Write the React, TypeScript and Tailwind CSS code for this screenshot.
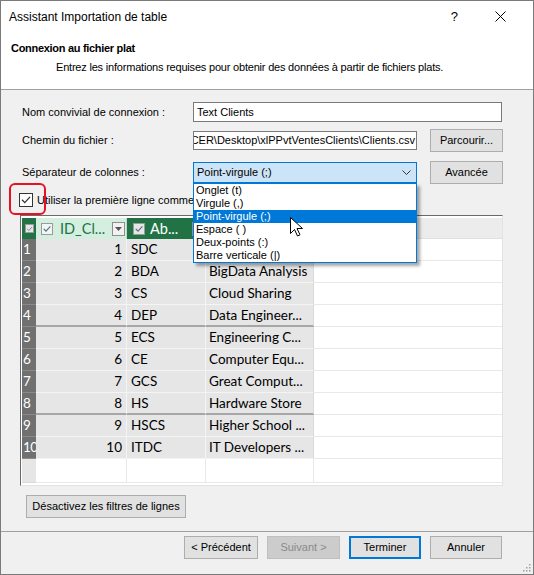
import React from 'react';

const dlg = "font-['Liberation_Sans',Arial,sans-serif]";
const grid = "font-['Lato','Noto_Sans',sans-serif]";

const rows = [
  { id: 1, ab: 'SDC', name: 'Software Dev...' },
  { id: 2, ab: 'BDA', name: 'BigData Analysis' },
  { id: 3, ab: 'CS', name: 'Cloud Sharing' },
  { id: 4, ab: 'DEP', name: 'Data Engineer...' },
  { id: 5, ab: 'ECS', name: 'Engineering C...' },
  { id: 6, ab: 'CE', name: 'Computer Equ...' },
  { id: 7, ab: 'GCS', name: 'Great Comput...' },
  { id: 8, ab: 'HS', name: 'Hardware Store' },
  { id: 9, ab: 'HSCS', name: 'Higher School ...' },
  { id: 10, ab: 'ITDC', name: 'IT Developers ...' },
];

const options = ['Onglet (t)', 'Virgule (,)', 'Point-virgule (;)', 'Espace ( )', 'Deux-points (:)', 'Barre verticale (|)'];

const Check = ({ className }: { className: string }) => (
  <svg className={className} viewBox="0 0 12 12" fill="none" stroke="currentColor" strokeWidth={1.3}>
    <path d="M2.5 6.2l2.3 2.4 4.8-5.2" strokeLinecap="square" />
  </svg>
);

const Btn = ({ label, w, extra = '' }: { label: string; w: string; extra?: string }) => (
  <div className={`${w} h-[23px] flex items-center justify-center bg-[#e1e1e1] border border-[#adadad] text-[11px] text-black ${extra}`}>
    {label}
  </div>
);

export default function App() {
  return (
    <div className={`${dlg} relative w-[534px] h-[575px] bg-[#f0f0f0] border border-[#7a7a7a] flex flex-col overflow-hidden`}>
      {/* title bar */}
      <div className="h-[31px] bg-white flex items-center pl-[8px]">
        <span className="text-[12px] text-black">Assistant Importation de table</span>
        <span className="ml-auto text-[13px] text-black mr-[37px]">?</span>
        <svg className="w-[11px] h-[11px] mr-[27px]" viewBox="0 0 11 11" stroke="#000" strokeWidth={1}>
          <path d="M0.5 0.5l10 10M10.5 0.5l-10 10" />
        </svg>
      </div>

      {/* header */}
      <div className="h-[58px] bg-white border-b border-[#a0a0a0] pl-[10px] pt-[8px]">
        <div className="text-[11px] font-bold text-black tracking-[-0.3px]">Connexion au fichier plat</div>
        <div className="text-[11px] text-black pl-[45px] mt-[2px] tracking-[-0.2px]">
          Entrez les informations requises pour obtenir des données à partir de fichiers plats.
        </div>
      </div>

      {/* body */}
      <div className="px-[19px] flex flex-col text-[11px] text-black">
        <div className="mt-[12px] h-[20px] flex items-center">
          <span className="w-[173px] pl-[2px]">Nom convivial de connexion :</span>
          <div className="w-[309px] h-[20px] bg-white border border-[#7a7a7a] flex items-center pl-[3px]">Text Clients</div>
        </div>

        <div className="mt-[6px] h-[24px] flex items-center">
          <span className="w-[173px] pl-[2px]">Chemin du fichier :</span>
          <div className="w-[224px] h-[19px] bg-white border border-[#7a7a7a] flex items-center overflow-hidden whitespace-nowrap justify-end pr-[1px]">
            <span className="shrink-0">\CER\Desktop\xlPPvtVentesClients\Clients.csv</span>
          </div>
          <Btn label="Parcourir..." w="w-[73px]" extra="ml-[13px]" />
        </div>

        <div className="mt-[9px] h-[23px] flex items-center">
          <span className="w-[173px] pl-[2px]">Séparateur de colonnes :</span>
          <div className="relative w-[224px] h-[21px] bg-[#cce4f7] border border-[#0078d7] flex items-center pl-[3px]">
            Point-virgule (;)
            <svg className="absolute right-[5px] top-[7px] w-[9px] h-[6px]" viewBox="0 0 9 6" fill="none" stroke="#333" strokeWidth={1}>
              <path d="M0.5 0.5l4 4 4-4" />
            </svg>
            {/* open list */}
            <div className="absolute left-[-1px] top-[20px] w-[224px] bg-white border border-[#0078d7] shadow-[3px_3px_3px_rgba(0,0,0,0.35)] z-20">
              {options.map((o, i) => (
                <div
                  key={o}
                  className={`h-[13px] leading-[13px] pl-[2px] text-[11px] ${i === 2 ? 'bg-[#0078d7] text-white' : 'text-black'}`}
                >
                  {o}
                </div>
              ))}
            </div>
          </div>
          <Btn label="Avancée" w="w-[73px]" extra="ml-[13px]" />
        </div>

        {/* checkbox row */}
        <div className="mt-[8px] h-[16px] flex items-center relative">
          <div className="relative ml-[-1px] w-[14px] h-[14px] bg-white border border-[#333] flex items-center justify-center">
            <Check className="w-[12px] h-[12px] text-[#333]" />
            <div className="absolute left-[-11px] top-[-11px] w-[37px] h-[32px] border-2 border-[#e81123] rounded-[6px]" />
          </div>
          <span className="ml-[4px] whitespace-nowrap">Utiliser la première ligne comme en-têtes de colonnes</span>
        </div>

        {/* data grid */}
        <div className={`${grid} mt-[7px] w-[483px] h-[271px] bg-white border-t border-l border-[#6a6a6a] border-r border-b border-r-[#e3e3e3] border-b-[#e3e3e3] pt-[2px] pl-[1px] overflow-hidden`}>
          <div className="flex h-[21px]">
            <div className="w-[14px] bg-[#217346] flex items-center justify-center">
              <div className="w-[9px] h-[9px] bg-[#e6e6e6] border border-[#9a9a9a] flex items-center justify-center">
                <Check className="w-[8px] h-[8px] text-[#5a6a8a]" />
              </div>
            </div>
            <div className="w-[91px] bg-[#d4efdf] border-r border-[#b9dcc7] flex items-center pl-[5px]">
              <div className="w-[12px] h-[12px] bg-[#eef7f1] border border-[#9a9a9a] flex items-center justify-center">
                <Check className="w-[10px] h-[10px] text-[#5a6a8a]" />
              </div>
              <span className="ml-[7px] text-[14.5px] text-[#217346]">ID_Cl...</span>
              <div className="ml-auto mr-[1px] w-[13px] h-[14px] bg-[#f2f2f2] border border-[#8f8f8f] flex items-center justify-center">
                <svg className="w-[7px] h-[4px]" viewBox="0 0 7 4" fill="#555"><path d="M0 0h7L3.5 4z" /></svg>
              </div>
            </div>
            <div className="w-[79px] bg-[#217346] flex items-center pl-[6px]">
              <div className="w-[12px] h-[12px] bg-[#e6e6e6] border border-[#9a9a9a] flex items-center justify-center">
                <Check className="w-[10px] h-[10px] text-[#5a6a8a]" />
              </div>
              <span className="ml-[5px] text-[14.5px] text-white">Ab...</span>
              <div className="ml-auto mr-[1px] w-[13px] h-[14px] bg-[#f2f2f2] border border-[#8f8f8f]" />
            </div>
            <div className="w-[108px] bg-[#217346]" />
            <div className="flex-1 bg-[#ececec] border-b border-[#e0e0e0]" />
          </div>

          {rows.map((r) => {
            const sep = r.id === 4 || r.id === 8 ? 'border-b-2 border-b-[#a6a6a6]' : 'border-b border-b-[#f4f4f4]';
            return (
              <div key={r.id} className="flex h-[22px] text-[13.5px] text-black">
                <div className="w-[14px] bg-[#707070] border-b border-[#8a8a8a] text-white flex items-center pl-[1px] tracking-[-0.5px]">{r.id}</div>
                <div className={`w-[91px] bg-[#e6e6e6] border-r border-r-[#f4f4f4] ${sep} flex items-center justify-end pr-[4px]`}>{r.id}</div>
                <div className={`w-[79px] bg-[#e6e6e6] border-r border-r-[#f4f4f4] ${sep} flex items-center pl-[4px]`}>{r.ab}</div>
                <div className={`w-[108px] bg-[#e6e6e6] border-r border-r-[#d9d9d9] ${sep} flex items-center pl-[3px] whitespace-nowrap overflow-hidden`}>{r.name}</div>
                <div className="flex-1 bg-white border-b border-[#e8e8e8]" />
              </div>
            );
          })}

          <div className="flex h-[24px]">
            <div className="w-[14px] bg-[#e6e6e6] border-b border-[#d9d9d9]" />
            <div className="w-[91px] border-r border-b border-[#e8e8e8]" />
            <div className="w-[79px] border-r border-b border-[#e8e8e8]" />
            <div className="w-[108px] border-r border-b border-[#e8e8e8]" />
            <div className="flex-1 border-b border-[#e8e8e8]" />
          </div>
        </div>

        <Btn label="Désactivez les filtres de lignes" w="w-[160px]" extra="mt-[9px] ml-[6px]" />
      </div>

      {/* footer */}
      <div className="mt-[13px] border-t border-[#a0a0a0] pt-[4px] flex justify-end pr-[31px] gap-[9px] text-[11px]">
        <Btn label="< Précédent" w="w-[74px]" />
        <div className="w-[73px] h-[23px] flex items-center justify-center bg-[#cccccc] border border-[#bfbfbf] text-[#8a8a8a]">Suivant &gt;</div>
        <div className="w-[72px] h-[23px] flex items-center justify-center bg-[#e1e1e1] border-2 border-[#0078d7] text-black">Terminer</div>
        <Btn label="Annuler" w="w-[72px]" />
      </div>

      {/* resize grip */}
      <svg className="absolute right-[2px] bottom-[2px] w-[9px] h-[9px]" viewBox="0 0 9 9" fill="#a0a0a0">
        <rect x="7" y="1" width="1.5" height="1.5" />
        <rect x="4" y="4" width="1.5" height="1.5" />
        <rect x="7" y="4" width="1.5" height="1.5" />
        <rect x="1" y="7" width="1.5" height="1.5" />
        <rect x="4" y="7" width="1.5" height="1.5" />
        <rect x="7" y="7" width="1.5" height="1.5" />
      </svg>

      {/* mouse pointer */}
      <svg className="absolute left-[289px] top-[216px] w-[13px] h-[20px] z-30" viewBox="0 0 13 20">
        <path d="M0.5 0.5v16l4-4 3 6.5 2.5-1.2-3-6.3h5.5z" fill="#fff" stroke="#000" strokeWidth={1} strokeLinejoin="round" />
      </svg>
    </div>
  );
}
